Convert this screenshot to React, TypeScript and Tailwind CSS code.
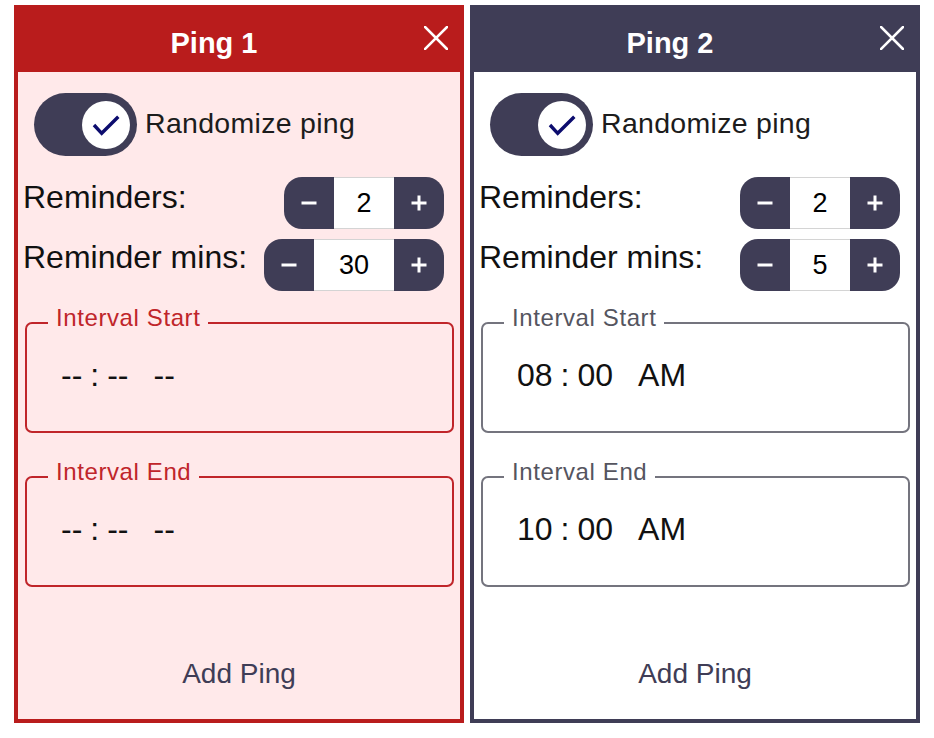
import React from "react";

type PingProps = {
  title: string;
  active: boolean;
  reminders: string;
  mins: string;
  start: [string, string, string] | null;
  end: [string, string, string] | null;
};

function MinusIcon() {
  return (
    <svg width="16" height="16" viewBox="0 0 16 16">
      <rect x="0.5" y="6.5" width="15" height="3" fill="white" />
    </svg>
  );
}

function PlusIcon() {
  return (
    <svg width="16" height="16" viewBox="0 0 16 16">
      <rect x="0.5" y="6.5" width="15" height="3" fill="white" />
      <rect x="6.5" y="0.5" width="3" height="15" fill="white" />
    </svg>
  );
}

function Stepper({ value }: { value: string }) {
  const mid = value.length > 1 ? "w-[80px]" : "w-[60px]";
  return (
    <div className="flex h-[52px] rounded-[18px] overflow-hidden bg-[#3f3d56]">
      <div className="w-[50px] flex items-center justify-center">
        <MinusIcon />
      </div>
      <div
        className={`${mid} bg-white border-y border-[#d4d4d4] flex items-center justify-center text-[27px] text-black leading-none pt-[1px]`}
      >
        {value}
      </div>
      <div className="w-[50px] flex items-center justify-center">
        <PlusIcon />
      </div>
    </div>
  );
}

function TimeField({
  label,
  value,
  active,
  className,
}: {
  label: string;
  value: [string, string, string] | null;
  active: boolean;
  className: string;
}) {
  const v = value ?? ["--", "--", "--"];
  return (
    <fieldset
      className={`${className} ml-[7px] mr-[6px] border-2 rounded-[7px] px-0 pb-0 ${
        active ? "border-[#c0252a]" : "border-[#74747e]"
      }`}
    >
      <legend
        className={`ml-[21px] px-[8px] text-[24px] tracking-[0.6px] leading-[28px] pb-[10px] ${
          active ? "text-[#c0252a]" : "text-[#55555f]"
        }`}
      >
        {label}
      </legend>
      <div className="h-[89px] pt-[15px] pl-[34px] flex items-start text-[32px] leading-[37px] text-[#111]">
        <span>{v[0]}</span>
        <span className="px-[8px]">:</span>
        <span>{v[1]}</span>
        <span className="ml-[25px]">{v[2]}</span>
      </div>
    </fieldset>
  );
}

function Ping({ title, active, reminders, mins, start, end }: PingProps) {
  const border = active ? "border-[#b91c1c]" : "border-[#3f3d56]";
  const head = active ? "bg-[#b91c1c]" : "bg-[#3f3d56]";
  const bg = active ? "bg-[#ffe9ea]" : "bg-white";
  return (
    <div className={`w-[450px] h-[718px] border-4 ${border} ${bg} flex flex-col`}>
      <div className={`${head} h-[63px] flex shrink-0`}>
        <div className="flex-1 flex items-center justify-center pt-[7px] text-white font-bold text-[29px]">
          {title}
        </div>
        <div className="w-[50px] flex justify-center pt-[17px] pl-[2px]">
          <svg width="24" height="24" viewBox="0 0 24 24">
            <path d="M1 1 L23 23 M23 1 L1 23" stroke="white" strokeWidth="2.6" strokeLinecap="square" />
          </svg>
        </div>
      </div>

      <div className="mt-[21px] pl-[16px] flex items-center">
        <div className="w-[103px] h-[63px] rounded-full bg-[#3f3d56] flex items-center justify-end pr-[7px]">
          <div className="w-[48px] h-[48px] rounded-full bg-white flex items-center justify-center">
            <svg width="48" height="48" viewBox="0 0 48 48">
              <path
                d="M12 24 L19.7 32.3 L36.3 15.7"
                fill="none"
                stroke="#0c0c6e"
                strokeWidth="3.4"
              />
            </svg>
          </div>
        </div>
        <span className="ml-[8px] text-[28.5px] tracking-[0.3px] text-[#1c1c1c] leading-none pb-[2px]">
          Randomize ping
        </span>
      </div>

      <div className="mt-[21px] pl-[5px] pr-[16px] flex items-start justify-between">
        <span className="text-[32px] text-[#111] leading-[35px] pt-[3px]">Reminders:</span>
        <Stepper value={reminders} />
      </div>
      <div className="mt-[10px] pl-[5px] pr-[16px] flex items-start justify-between">
        <span className="text-[32px] text-[#111] leading-[35px] pt-[1px]">Reminder mins:</span>
        <Stepper value={mins} />
      </div>

      <TimeField label="Interval Start" value={start} active={active} className="mt-[13px]" />
      <TimeField label="Interval End" value={end} active={active} className="mt-[25px]" />

      <div className="mt-auto mb-[29px] text-center text-[28px] leading-[32px] text-[#3f3d56]">
        Add Ping
      </div>
    </div>
  );
}

export default function App() {
  return (
    <div
      className="w-[934px] h-[738px] bg-white flex gap-[6px] pl-[14px] pt-[5px]"
      style={{ fontFamily: '"Liberation Sans", Arial, Helvetica, sans-serif' }}
    >
      <Ping title="Ping 1" active reminders="2" mins="30" start={null} end={null} />
      <Ping
        title="Ping 2"
        active={false}
        reminders="2"
        mins="5"
        start={["08", "00", "AM"]}
        end={["10", "00", "AM"]}
      />
    </div>
  );
}
